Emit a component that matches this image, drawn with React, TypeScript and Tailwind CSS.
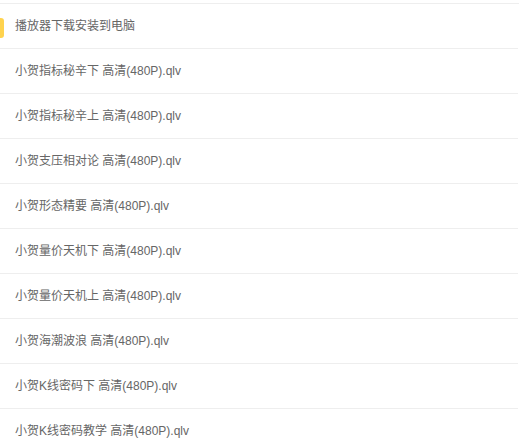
const items = [
  "小贺指标秘辛下 高清(480P).qlv",
  "小贺指标秘辛上 高清(480P).qlv",
  "小贺支压相对论 高清(480P).qlv",
  "小贺形态精要 高清(480P).qlv",
  "小贺量价天机下 高清(480P).qlv",
  "小贺量价天机上 高清(480P).qlv",
  "小贺海潮波浪 高清(480P).qlv",
  "小贺K线密码下 高清(480P).qlv",
  "小贺K线密码教学 高清(480P).qlv",
];

function Row({ label, active }: { label: string; active?: boolean }) {
  return (
    <li className="relative flex h-[45px] items-center border-b border-[#eeeeee] pl-[15px]">
      {active && (
        <span className="absolute left-0 top-[14px] h-[20px] w-[4px] rounded-r-[3px] bg-[#ffd34e]" />
      )}
      <span className="text-[12px] text-[#666666]">{label}</span>
    </li>
  );
}

export default function App() {
  return (
    <div
      className="h-[447px] w-[519px] overflow-hidden bg-white pt-[3px]"
      style={{ fontFamily: '"Liberation Sans", "Noto Sans CJK SC", sans-serif' }}
    >
      <ul className="border-t border-[#eeeeee] pr-[1px]">
        <Row label="播放器下载安装到电脑" active />
        {items.map((it) => (
          <Row key={it} label={it} />
        ))}
      </ul>
    </div>
  );
}
